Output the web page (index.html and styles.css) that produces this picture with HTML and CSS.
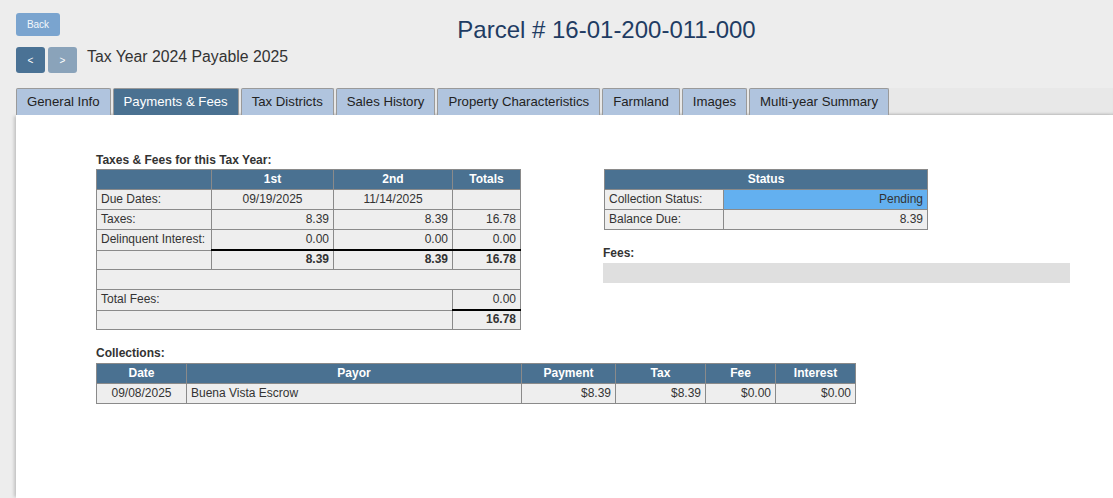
FILE: index.html
```html
<!DOCTYPE html>
<html lang="en">
<head>
<meta charset="utf-8">
<title>Parcel # 16-01-200-011-000</title>
<link rel="stylesheet" href="styles.css">
</head>
<body>
<div class="page">
  <header class="top">
    <div class="row1">
      <button class="back">Back</button>
      <h1 class="parcel">Parcel # 16-01-200-011-000</h1>
    </div>
    <div class="row2">
      <button class="nav prev">&lt;</button>
      <button class="nav next">&gt;</button>
      <span class="year">Tax Year 2024 Payable 2025</span>
    </div>
  </header>

  <nav class="tabs">
    <a class="tab">General Info</a>
    <a class="tab active">Payments &amp; Fees</a>
    <a class="tab">Tax Districts</a>
    <a class="tab">Sales History</a>
    <a class="tab">Property Characteristics</a>
    <a class="tab">Farmland</a>
    <a class="tab">Images</a>
    <a class="tab">Multi-year Summary</a>
  </nav>

  <main class="content">
    <div class="upper">
      <section class="left-col">
        <h3 class="label">Taxes &amp; Fees for this Tax Year:</h3>
        <table class="grid taxes">
          <colgroup>
            <col class="c-label"><col class="c-first"><col class="c-second"><col class="c-total">
          </colgroup>
          <thead>
            <tr><th></th><th>1st</th><th>2nd</th><th>Totals</th></tr>
          </thead>
          <tbody>
            <tr><td>Due Dates:</td><td class="ctr">09/19/2025</td><td class="ctr">11/14/2025</td><td></td></tr>
            <tr><td>Taxes:</td><td class="num">8.39</td><td class="num">8.39</td><td class="num">16.78</td></tr>
            <tr><td>Delinquent Interest:</td><td class="num">0.00</td><td class="num">0.00</td><td class="num">0.00</td></tr>
            <tr class="sum"><td></td><td class="num b thick">8.39</td><td class="num b thick">8.39</td><td class="num b thick">16.78</td></tr>
            <tr><td colspan="4" class="blank"></td></tr>
            <tr><td colspan="3">Total Fees:</td><td class="num">0.00</td></tr>
            <tr class="sum"><td colspan="3"></td><td class="num b thick">16.78</td></tr>
          </tbody>
        </table>
      </section>

      <section class="right-col">
        <table class="grid status">
          <colgroup><col class="s-label"><col class="s-value"></colgroup>
          <thead><tr><th colspan="2">Status</th></tr></thead>
          <tbody>
            <tr><td>Collection Status:</td><td class="num pending">Pending</td></tr>
            <tr><td>Balance Due:</td><td class="num">8.39</td></tr>
          </tbody>
        </table>
        <h3 class="label fees-label">Fees:</h3>
        <div class="fees-bar"></div>
      </section>
    </div>

    <section class="collections">
      <h3 class="label">Collections:</h3>
      <table class="grid coll">
        <colgroup>
          <col class="k-date"><col class="k-payor"><col class="k-pay"><col class="k-tax"><col class="k-fee"><col class="k-int">
        </colgroup>
        <thead>
          <tr><th>Date</th><th>Payor</th><th>Payment</th><th>Tax</th><th>Fee</th><th>Interest</th></tr>
        </thead>
        <tbody>
          <tr><td class="ctr">09/08/2025</td><td>Buena Vista Escrow</td><td class="num">$8.39</td><td class="num">$8.39</td><td class="num">$0.00</td><td class="num">$0.00</td></tr>
        </tbody>
      </table>
    </section>
  </main>
</div>
</body>
</html>
```

FILE: styles.css
```css
* { box-sizing: border-box; }
html, body { margin: 0; padding: 0; }
body {
  background: #ededed;
  font-family: "Liberation Sans", Arial, Helvetica, sans-serif;
  color: #333;
  overflow: hidden;
}
.page {
  padding: 13px 0 0 16px;
}
.row1 {
  display: flex;
  align-items: flex-start;
  height: 23px;
}
.back {
  width: 44px;
  height: 23px;
  border: 0;
  border-radius: 3px;
  background: #7aa4cf;
  color: #f4f8fc;
  font-family: inherit;
  font-size: 10px;
  padding: 0;
  margin: 0;
}
.parcel {
  flex: 1;
  margin: 3px 0 0 0;
  padding-left: 40px;
  text-align: center;
  font-size: 24px;
  line-height: 28px;
  font-weight: normal;
  color: #1f3c63;
  white-space: nowrap;
}
.row2 {
  display: flex;
  align-items: flex-start;
  margin-top: 11px;
  gap: 3px;
}
.nav {
  width: 29px;
  height: 26px;
  border: 0;
  border-radius: 3px;
  color: #fff;
  font-family: inherit;
  font-size: 10px;
  padding: 0;
  margin: 0;
}
.prev { background: #4a7295; }
.next { background: #8aa3ba; }
.year {
  margin: 1px 0 0 7px;
  font-size: 15.8px;
  line-height: 18px;
  color: #333;
}
.tabs {
  display: flex;
  gap: 2px;
  margin-top: 15px;
  height: 27px;
  background: #e8e8e8;
  box-shadow: inset 0 -3px 3px -2px rgba(0, 0, 0, 0.18);
}
.tab {
  display: block;
  height: 27px;
  padding: 0 10px;
  border: 1px solid #9a9a9a;
  border-bottom: 0;
  border-radius: 2px 2px 0 0;
  background: #b0c4de;
  color: #222;
  font-size: 13.2px;
  line-height: 26px;
  white-space: nowrap;
}
.tab.active {
  background: #4a7191;
  color: #fff;
}
.content {
  background: #fff;
  min-height: 383px;
  padding: 38px 0 0 80px;
  box-shadow: -3px 0 3px -1px rgba(0, 0, 0, 0.18);
}
.upper {
  display: flex;
  gap: 83px;
}
.left-col { width: 424px; }
.right-col {
  width: 467px;
  padding-top: 16px;
}
.label {
  margin: 0 0 2px 0;
  font-size: 12px;
  line-height: 14px;
  font-weight: bold;
  color: #333;
}
.grid {
  border-collapse: collapse;
  table-layout: fixed;
  font-size: 12px;
  line-height: 13px;
}
.grid th, .grid td {
  border: 1px solid #8a8a8a;
  padding: 3px 4px;
  height: 20px;
  white-space: nowrap;
  overflow: hidden;
}
.grid th {
  background: #4a7191;
  color: #fff;
  font-weight: bold;
  text-align: center;
}
.grid td {
  background: #eeeeee;
  color: #333;
  text-align: left;
}
.grid td.num { text-align: right; }
.grid td.ctr { text-align: center; }
.grid td.b { font-weight: bold; }
.grid td.thick { border-top: 2px solid #000; }
.grid tr.sum td { height: 19px; padding-top: 2px; }
.grid td.blank { height: 20px; }

.taxes { width: 424px; }
.c-label { width: 115px; }
.c-first { width: 122px; }
.c-second { width: 119px; }
.c-total { width: 68px; }

.status { width: 323px; margin-left: 1px; }
.s-label { width: 119px; }
.s-value { width: 204px; }
.grid td.pending { background: #63b0f0; }

.fees-label { margin-top: 16px; margin-bottom: 3px; }
.fees-bar {
  height: 20px;
  background: #dfdfdf;
}

.collections { margin-top: 16px; }
.collections .label { margin-bottom: 3px; }
.coll { width: 759px; }
.k-date { width: 90px; }
.k-payor { width: 335px; }
.k-pay { width: 94px; }
.k-tax { width: 90px; }
.k-fee { width: 70px; }
.k-int { width: 80px; }
```
